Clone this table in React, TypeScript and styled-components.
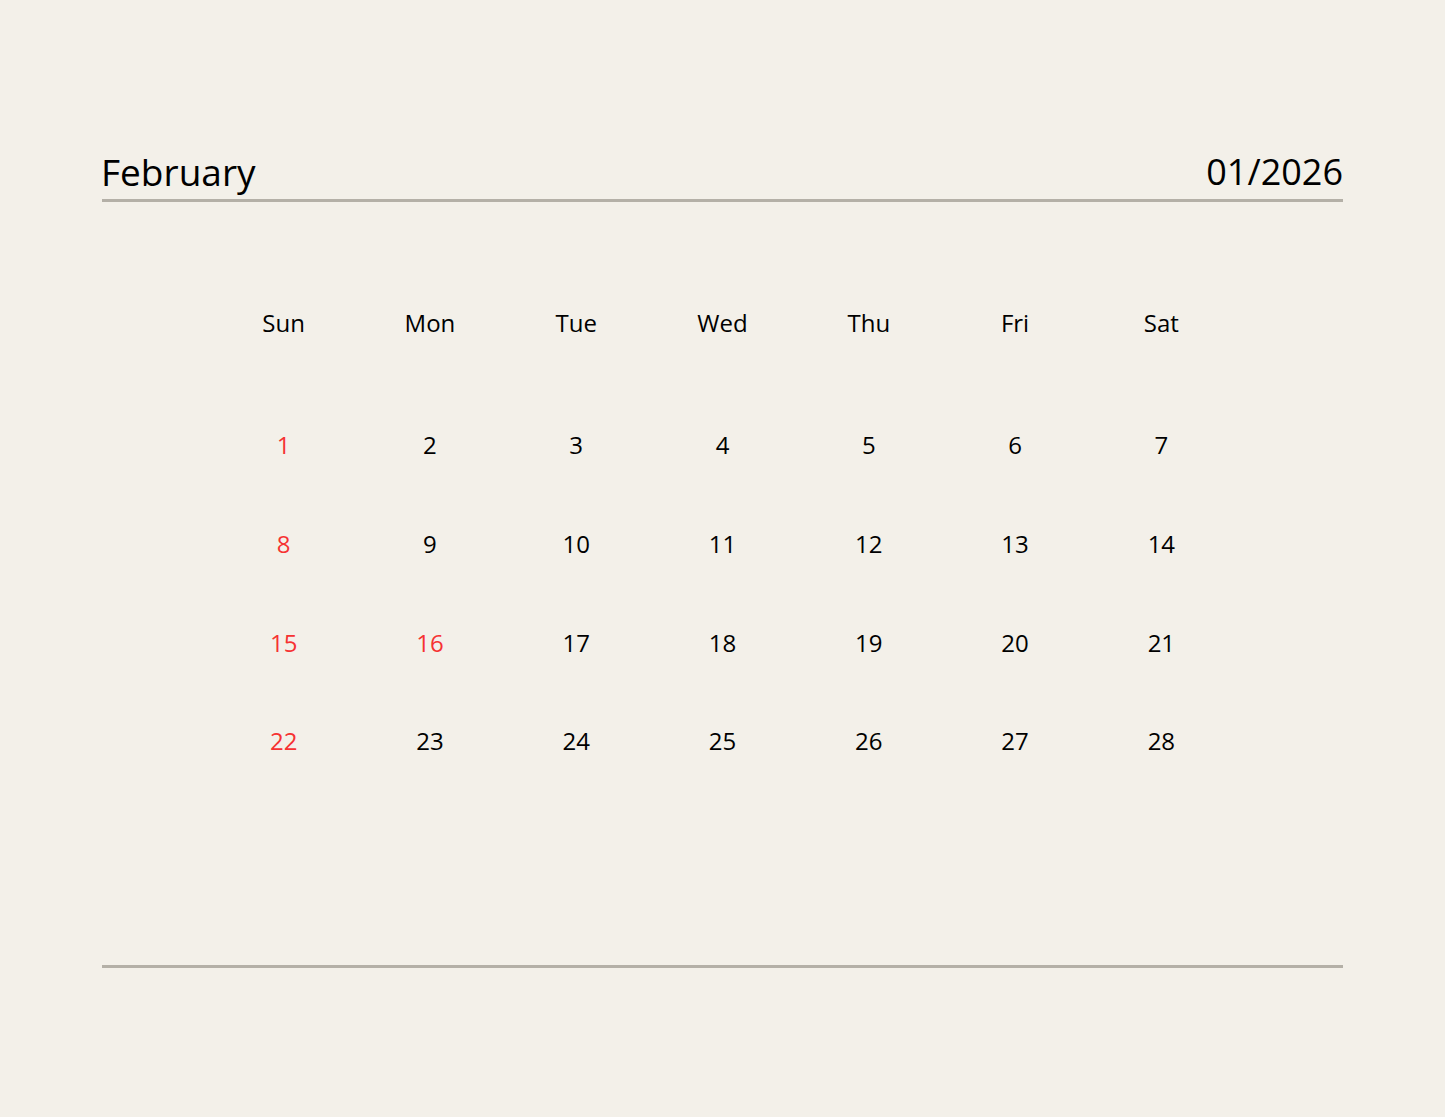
import React from 'react';
import styled, { createGlobalStyle } from 'styled-components';

const MONTH = 'February';
const STAMP = '01/2026';
const WEEKDAYS = ['Sun', 'Mon', 'Tue', 'Wed', 'Thu', 'Fri', 'Sat'];
// days shown in red: sundays and the holiday
const HOLIDAYS = [16];

const weeks: number[][] = [...Array(4)].map((_, w) =>
  [...Array(7)].map((_, d) => w * 7 + d + 1)
);

const isRed = (day: number, col: number) => col === 0 || HOLIDAYS.includes(day);

const GlobalStyle = createGlobalStyle`
  html, body {
    margin: 0;
    padding: 0;
    background: #f3f0e9;
  }
  body {
    font-family: 'Open Sans', 'Noto Sans', sans-serif;
    color: #000;
  }
`;

const App = (): JSX.Element => {
  return (
    <>
      <GlobalStyle />
      <Page>
        <Header>
          <Title>{MONTH}</Title>
          <Stamp>{STAMP}</Stamp>
        </Header>
        <Calendar>
          <WeekdayRow>
            {WEEKDAYS.map((name) => (
              <Weekday key={name}>{name}</Weekday>
            ))}
          </WeekdayRow>
          {weeks.map((week, i) => (
            <WeekRow key={i.toString()}>
              {week.map((day, col) => (
                <Day key={day} red={isRed(day, col)}>
                  {day}
                </Day>
              ))}
            </WeekRow>
          ))}
        </Calendar>
        <Divider />
      </Page>
    </>
  );
};

const Page = styled.div`
  display: flex;
  flex-direction: column;
  min-height: 100vh;
  box-sizing: border-box;
  padding: 147px 102px 0 102px;
`;

const Header = styled.div`
  display: flex;
  justify-content: space-between;
  align-items: flex-end;
  padding-bottom: 2px;
  border-bottom: 3px solid #b4b0a7;
`;

const Title = styled.div`
  font-size: 37px;
  line-height: 50px;
  margin-left: -1px;
`;

const Stamp = styled.div`
  font-size: 36px;
  line-height: 50px;
`;

const Calendar = styled.div`
  width: 1024px;
  margin: 105px auto 0;
`;

const WeekdayRow = styled.div`
  display: grid;
  grid-template-columns: repeat(7, 1fr);
  margin-bottom: 57px;
`;

const Weekday = styled.div`
  text-align: center;
  font-size: 24px;
  line-height: 32px;
`;

const WeekRow = styled.div`
  display: grid;
  grid-template-columns: repeat(7, 1fr);
  align-items: center;
  height: 98.67px;
`;

const Day = styled.div<{ red?: boolean }>`
  text-align: center;
  font-size: 24px;
  line-height: 32px;
  color: ${({ red }) => (red ? '#f63232' : '#000')};
`;

const Divider = styled.div`
  margin-top: 174px;
  height: 3px;
  background: #b4b0a7;
`;

export default App;
